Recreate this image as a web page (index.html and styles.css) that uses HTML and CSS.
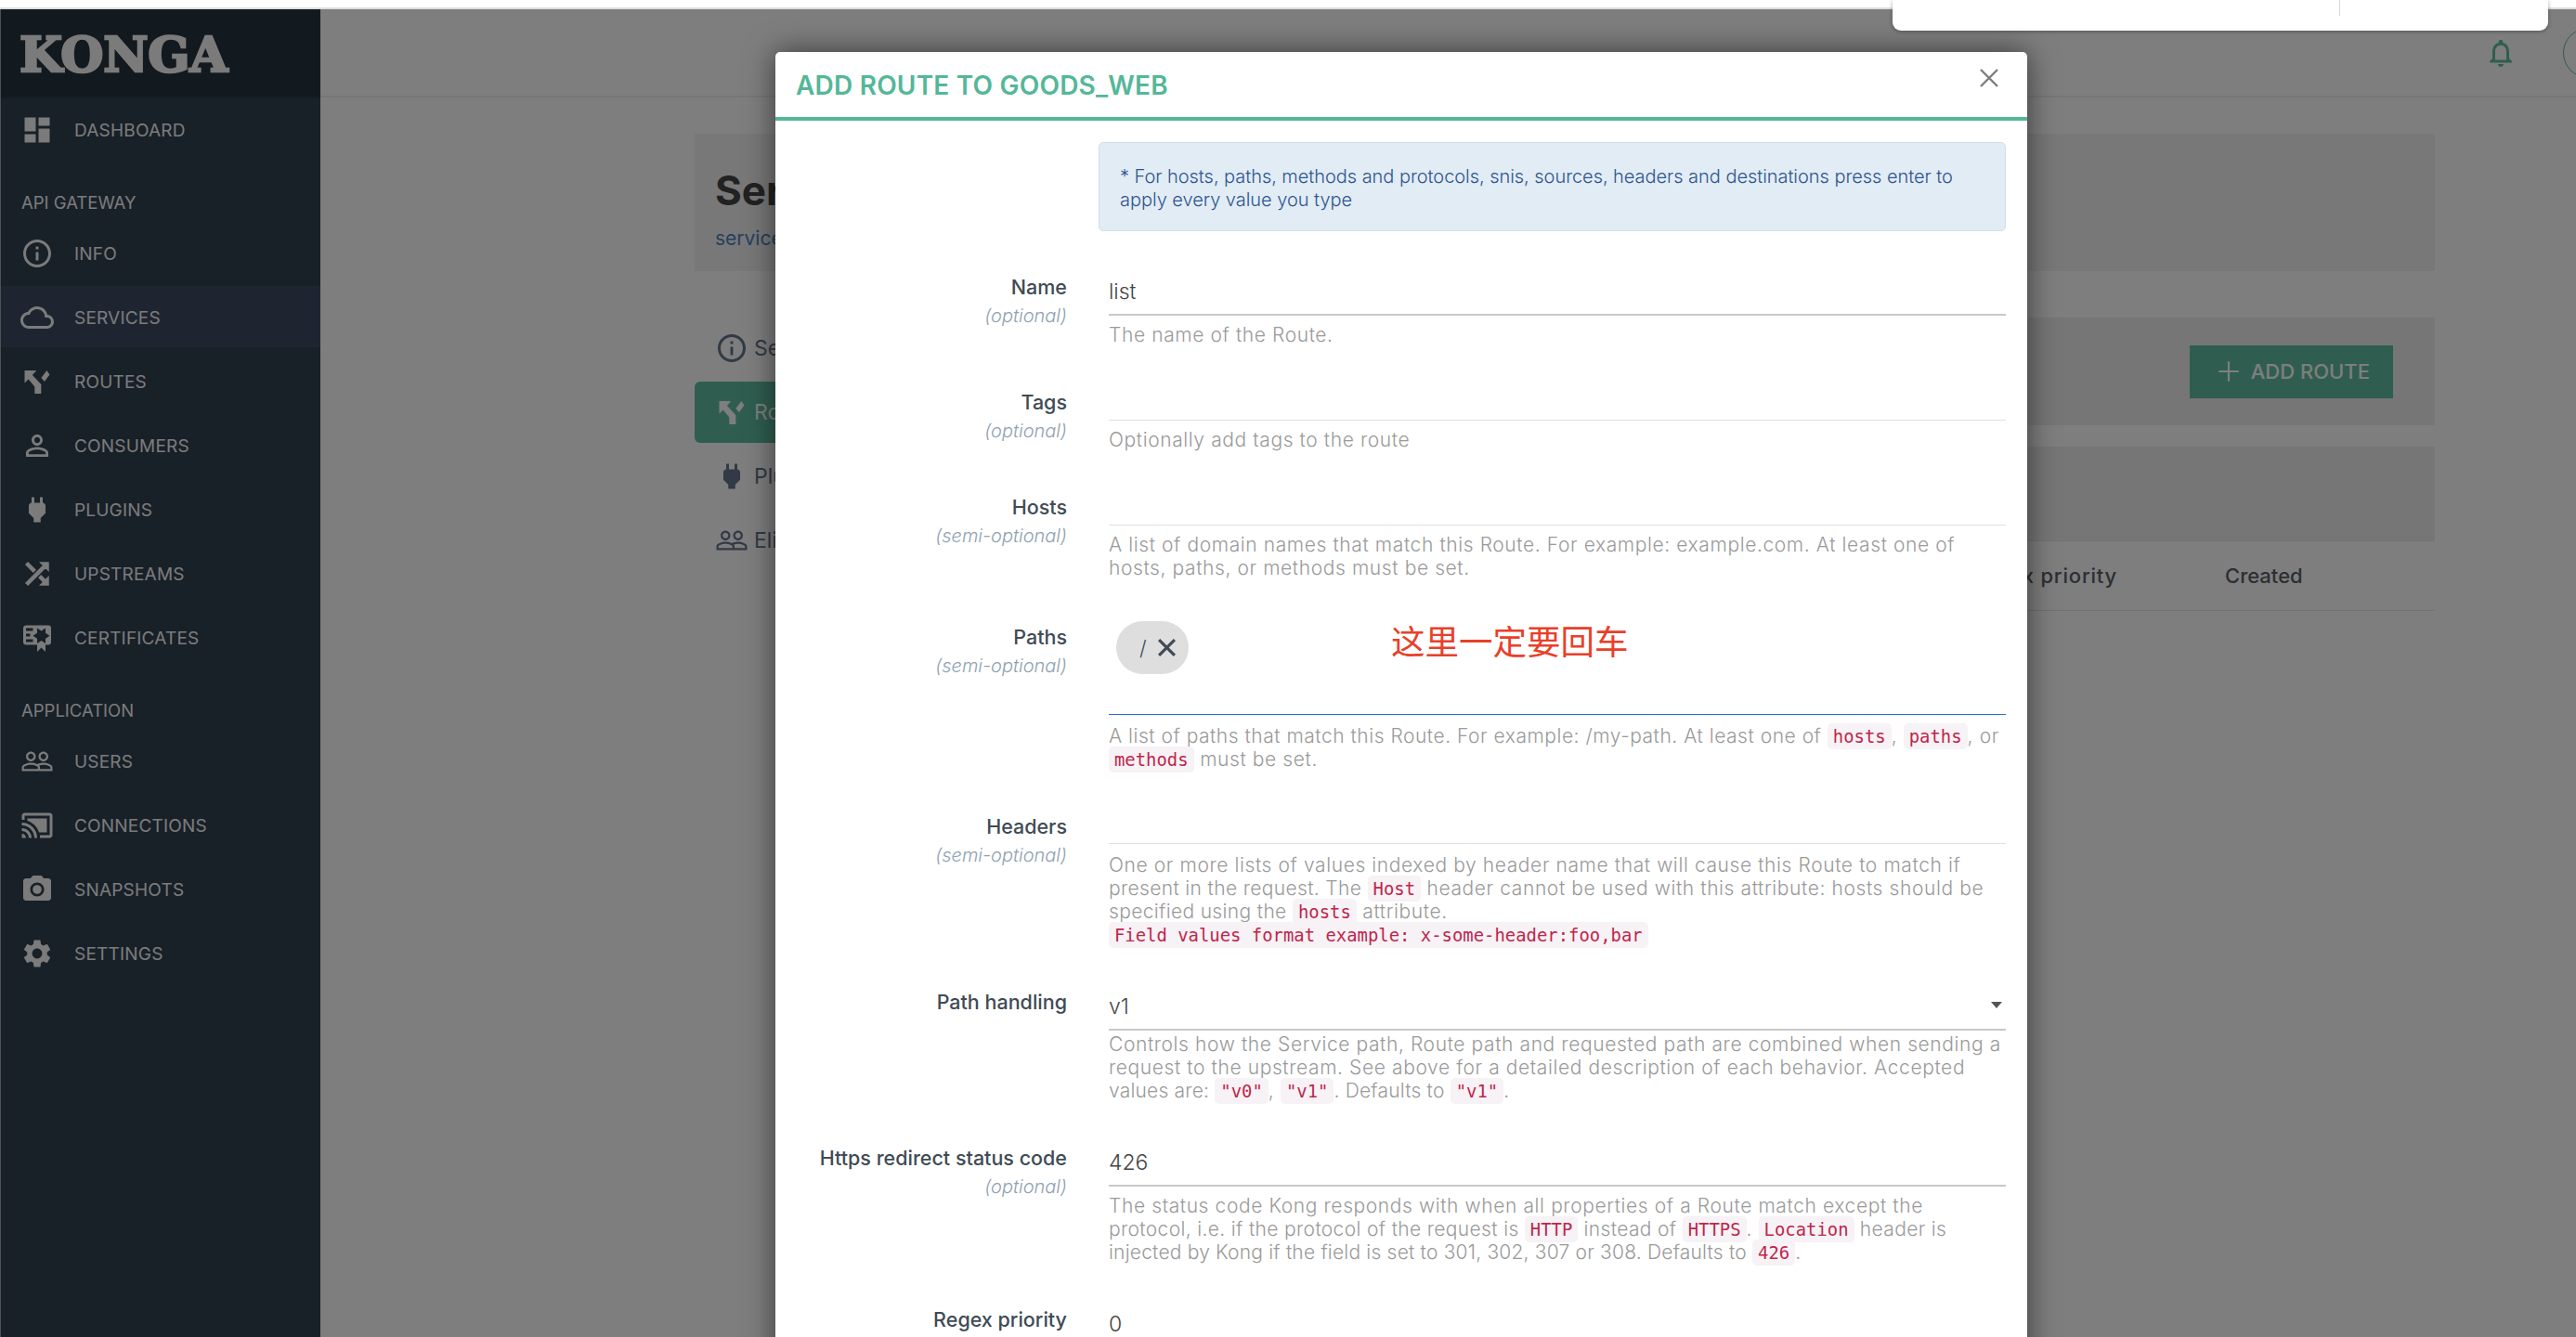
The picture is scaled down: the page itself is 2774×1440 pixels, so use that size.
FILE: index.html
```html
<!DOCTYPE html>
<html lang="en">
<head>
  <meta charset="UTF-8" />
  <title>Konga</title>
  <link rel="stylesheet" href="styles.css">
</head>
<body>

  <div class="top-strip"></div>
  <div class="top-panel"><span class="top-panel-rule"></span></div>

  <div class="app">
    <aside class="sidebar">
      <div class="logo">KONGA</div>
      <nav>
        <a class="nav-item"><svg viewBox="0 0 24 24"><path d="M3 13h8V3H3v10zm0 8h8v-6H3v6zm10 0h8V11h-8v10zm0-18v6h8V3h-8z"/></svg>DASHBOARD</a>
        <div class="nav-title">API GATEWAY</div>
        <a class="nav-item"><svg viewBox="0 0 24 24"><path d="M11 17h2v-6h-2v6zm1-15C6.48 2 2 6.48 2 12s4.48 10 10 10 10-4.48 10-10S17.52 2 12 2zm0 18c-4.41 0-8-3.59-8-8s3.59-8 8-8 8 3.59 8 8-3.59 8-8 8zm-1-11h2V7h-2v2z"/></svg>INFO</a>
        <a class="nav-item active"><svg viewBox="0 0 24 24"><path d="M19.35 10.04C18.67 6.59 15.64 4 12 4 9.11 4 6.6 5.64 5.35 8.04 2.34 8.36 0 10.91 0 14c0 3.31 2.69 6 6 6h13c2.76 0 5-2.24 5-5 0-2.64-2.05-4.78-4.65-4.96zM19 18H6c-2.21 0-4-1.79-4-4s1.79-4 4-4h.71C7.37 7.69 9.48 6 12 6c3.04 0 5.5 2.46 5.5 5.5v.5H19c1.66 0 3 1.34 3 3s-1.34 3-3 3z"/></svg>SERVICES</a>
        <a class="nav-item"><svg viewBox="0 0 24 24"><path d="M3 4h8.5L8.6 7.4l6.3 6.6v6.7h-4.7v-5.1L5.8 10.4 3 13zM14.9 9.3L18.9 4 21 7l-3.7 5z"/></svg>ROUTES</a>
        <a class="nav-item"><svg viewBox="0 0 24 24"><path d="M12 5.9c1.16 0 2.1.94 2.1 2.1s-.94 2.1-2.1 2.1S9.9 9.16 9.9 8s.94-2.1 2.1-2.1m0 9c2.97 0 6.1 1.46 6.1 2.1v1.1H5.9V17c0-.64 3.13-2.1 6.1-2.1M12 4C9.79 4 8 5.79 8 8s1.79 4 4 4 4-1.79 4-4-1.79-4-4-4zm0 9c-2.67 0-8 1.34-8 4v3h16v-3c0-2.66-5.33-4-8-4z"/></svg>CONSUMERS</a>
        <a class="nav-item"><svg viewBox="0 0 24 24"><path d="M16,7V3H14V7H10V3H8V7C7,7 6,8 6,9V14.5L9.5,18V21H14.5V18L18,14.5V9C18,8 17,7 16,7Z"/></svg>PLUGINS</a>
        <a class="nav-item"><svg class="thick" viewBox="0 0 24 24"><path d="M10.59 9.17L5.41 4 4 5.41l5.17 5.17 1.42-1.41zM14.5 4l2.04 2.04L4 18.59 5.41 20 17.96 7.46 20 9.5V4h-5.5zm.33 9.41l-1.41 1.41 3.13 3.13L14.5 20H20v-5.5l-2.04 2.04-3.13-3.13z"/></svg>UPSTREAMS</a>
        <a class="nav-item"><svg viewBox="0 0 24 24"><path d="M4,3C2.89,3 2,3.89 2,5V15A2,2 0 0,0 4,17H12V22L15,19L18,22V17H20A2,2 0 0,0 22,15V8L22,6V5A2,2 0 0,0 20,3H16V3H4M12,5L15,7L18,5V8.5L21,10.5L18,12.5V16L15,14L12,16V12.5L9,10.5L12,8.5V5M4,5H9V7H4V5M4,9H7V11H4V9M4,13H9V15H4V13Z"/></svg>CERTIFICATES</a>
        <div class="nav-title">APPLICATION</div>
        <a class="nav-item"><svg viewBox="0 0 24 24"><path d="M16.5 13c-1.2 0-3.07.34-4.5 1-1.43-.67-3.3-1-4.5-1C5.33 13 1 14.08 1 16.25V19h22v-2.75c0-2.17-4.33-3.25-6.5-3.25zm-4 4.5h-10v-1.25c0-.54 2.56-1.75 5-1.75s5 1.21 5 1.75v1.25zm9 0H14v-1.25c0-.46-.2-.86-.52-1.22.88-.3 1.96-.53 3.02-.53 2.44 0 5 1.21 5 1.75v1.25zM7.5 12c1.93 0 3.5-1.57 3.5-3.5S9.43 5 7.5 5 4 6.57 4 8.5 5.57 12 7.5 12zm0-5.5c1.1 0 2 .9 2 2s-.9 2-2 2-2-.9-2-2 .9-2 2-2zm9 5.5c1.93 0 3.5-1.57 3.5-3.5S18.43 5 16.5 5 13 6.57 13 8.5s1.57 3.5 3.5 3.5zm0-5.5c1.1 0 2 .9 2 2s-.9 2-2 2-2-.9-2-2 .9-2 2-2z"/></svg>USERS</a>
        <a class="nav-item"><svg viewBox="0 0 24 24"><path d="M1 18v3h3c0-1.66-1.34-3-3-3zm0-4v2c2.76 0 5 2.24 5 5h2c0-3.87-3.13-7-7-7zm18-7H5v1.63c3.96 1.28 7.09 4.41 8.37 8.37H19V7zM1 10v2c4.97 0 9 4.03 9 9h2c0-6.08-4.93-11-11-11zm20-7H3c-1.1 0-2 .9-2 2v3h2V5h18v14h-7v2h7c1.1 0 2-.9 2-2V5c0-1.1-.9-2-2-2z"/></svg>CONNECTIONS</a>
        <a class="nav-item"><svg viewBox="0 0 24 24"><circle cx="12" cy="12" r="3.2"/><path d="M9 2L7.17 4H4c-1.1 0-2 .9-2 2v12c0 1.1.9 2 2 2h16c1.1 0 2-.9 2-2V6c0-1.1-.9-2-2-2h-3.17L15 2H9zm3 15c-2.76 0-5-2.24-5-5s2.24-5 5-5 5 2.24 5 5-2.24 5-5 5z"/></svg>SNAPSHOTS</a>
        <a class="nav-item"><svg viewBox="0 0 24 24"><path d="M19.14 12.94c.04-.3.06-.61.06-.94 0-.32-.02-.64-.07-.94l2.03-1.58a.49.49 0 00.12-.61l-1.92-3.32a.488.488 0 00-.59-.22l-2.39.96c-.5-.38-1.03-.7-1.62-.94l-.36-2.54a.484.484 0 00-.48-.41h-3.84c-.24 0-.43.17-.47.41l-.36 2.54c-.59.24-1.13.57-1.62.94l-2.39-.96c-.22-.08-.47 0-.59.22L2.74 8.87c-.12.21-.08.47.12.61l2.03 1.58c-.05.3-.09.63-.09.94s.02.64.07.94l-2.03 1.58a.49.49 0 00-.12.61l1.92 3.32c.12.22.37.29.59.22l2.39-.96c.5.38 1.03.7 1.62.94l.36 2.54c.05.24.24.41.48.41h3.84c.24 0 .44-.17.47-.41l.36-2.54c.59-.24 1.13-.56 1.62-.94l2.39.96c.22.08.47 0 .59-.22l1.92-3.32c.12-.22.07-.47-.12-.61l-2.01-1.58zM12 15.6c-1.98 0-3.6-1.62-3.6-3.6s1.62-3.6 3.6-3.6 3.6 1.62 3.6 3.6-1.62 3.6-3.6 3.6z"/></svg>SETTINGS</a>
      </nav>
    </aside>

    <main class="main">
      <header class="topbar">
        <svg class="bell" viewBox="0 0 24 24"><path d="M12 22c1.1 0 2-.9 2-2h-4c0 1.1.9 2 2 2zm6-6v-5c0-3.07-1.63-5.64-4.5-6.32V4c0-.83-.67-1.5-1.5-1.5s-1.5.67-1.5 1.5v.68C7.64 5.36 6 7.92 6 11v5l-2 2v1h16v-1l-2-2zm-2 1H8v-6c0-2.48 1.51-4.5 4-4.5s4 2.02 4 4.5v6z"/></svg>
        <div class="avatar"></div>
      </header>

      <div class="content">
        <section class="title-card">
          <h1>Service</h1>
          <a class="crumb">services</a>
        </section>

        <div class="columns">
          <ul class="tabs">
            <li class="tab"><svg viewBox="0 0 24 24"><path d="M11 17h2v-6h-2v6zm1-15C6.48 2 2 6.48 2 12s4.48 10 10 10 10-4.48 10-10S17.52 2 12 2zm0 18c-4.41 0-8-3.59-8-8s3.59-8 8-8 8 3.59 8 8-3.59 8-8 8zm-1-11h2V7h-2v2z"/></svg>Service Details</li>
            <li class="tab current"><svg viewBox="0 0 24 24"><path d="M3 4h8.5L8.6 7.4l6.3 6.6v6.7h-4.7v-5.1L5.8 10.4 3 13zM14.9 9.3L18.9 4 21 7l-3.7 5z"/></svg>Routes</li>
            <li class="tab"><svg viewBox="0 0 24 24"><path d="M16,7V3H14V7H10V3H8V7C7,7 6,8 6,9V14.5L9.5,18V21H14.5V18L18,14.5V9C18,8 17,7 16,7Z"/></svg>Plugins</li>
            <li class="tab"><svg viewBox="0 0 24 24"><path d="M16.5 13c-1.2 0-3.07.34-4.5 1-1.43-.67-3.3-1-4.5-1C5.33 13 1 14.08 1 16.25V19h22v-2.75c0-2.17-4.33-3.25-6.5-3.25zm-4 4.5h-10v-1.25c0-.54 2.56-1.75 5-1.75s5 1.21 5 1.75v1.25zm9 0H14v-1.25c0-.46-.2-.86-.52-1.22.88-.3 1.96-.53 3.02-.53 2.44 0 5 1.21 5 1.75v1.25zM7.5 12c1.93 0 3.5-1.57 3.5-3.5S9.43 5 7.5 5 4 6.57 4 8.5 5.57 12 7.5 12zm0-5.5c1.1 0 2 .9 2 2s-.9 2-2 2-2-.9-2-2 .9-2 2-2zm9 5.5c1.93 0 3.5-1.57 3.5-3.5S18.43 5 16.5 5 13 6.57 13 8.5s1.57 3.5 3.5 3.5zm0-5.5c1.1 0 2 .9 2 2s-.9 2-2 2-2-.9-2-2 .9-2 2-2z"/></svg>Eligible consumers</li>
          </ul>

          <div class="panel">
            <div class="action-card">
              <button class="add-btn" type="button"><svg viewBox="0 0 24 24"><path d="M11 2h2v9h9v2h-9v9h-2v-9H2v-2h9z"/></svg>ADD ROUTE</button>
            </div>
            <div class="search-card"></div>
            <div class="table-head">
              <span class="col-regex">Regex priority</span>
              <span class="col-created">Created</span>
            </div>
          </div>
        </div>
      </div>
    </main>

    <div class="backdrop"></div>

    <div class="modal">
      <div class="modal-head">
        <h3>ADD ROUTE TO GOODS_WEB</h3>
        <svg class="modal-close" viewBox="0 0 20 20"><path d="M1 1l18 18M19 1L1 19"/></svg>
      </div>

      <form class="modal-body">
        <div class="row">
          <div class="row-label"></div>
          <div class="info-box">* For hosts, paths, methods and protocols, snis, sources, headers and destinations press enter to<br>apply every value you type</div>
        </div>

        <div class="row">
          <label class="row-label">Name<em>(optional)</em></label>
          <div class="row-field">
            <input class="text-input" value="list" />
            <p class="help">The name of the Route.</p>
          </div>
        </div>

        <div class="row">
          <label class="row-label">Tags<em>(optional)</em></label>
          <div class="row-field">
            <div class="tag-input"></div>
            <p class="help">Optionally add tags to the route</p>
          </div>
        </div>

        <div class="row">
          <label class="row-label">Hosts<em>(semi-optional)</em></label>
          <div class="row-field">
            <div class="tag-input"></div>
            <p class="help">A list of domain names that match this Route. For example: example.com. At least one of<br>hosts, paths, or methods must be set.</p>
          </div>
        </div>

        <div class="row paths">
          <label class="row-label">Paths<em>(semi-optional)</em></label>
          <div class="row-field">
            <div class="tag-input focused">
              <span class="chip"><span class="chip-text">/</span><svg viewBox="0 0 20 20"><path d="M2 2l16 16M18 2L2 18"/></svg></span>
              <span class="note">这里一定要回车</span>
            </div>
            <p class="help wide"><span class="loose">A list of paths that match this Route. For example: /my-path. At least one of </span><code>hosts</code>, <code>paths</code>, or<br><code>methods</code> must be set.</p>
          </div>
        </div>

        <div class="row">
          <label class="row-label">Headers<em>(semi-optional)</em></label>
          <div class="row-field">
            <div class="tag-input short"></div>
            <p class="help wide">One or more lists of values indexed by header name that will cause this Route to match if<br><span class="snug">present in the request. The </span><code>Host</code> header cannot be used with this attribute: hosts should be<br><span class="snug">specified using the </span><code>hosts</code> attribute.<br><code>Field values format example: x-some-header:foo,bar</code></p>
          </div>
        </div>

        <div class="row">
          <label class="row-label">Path handling</label>
          <div class="row-field">
            <div class="select-wrap">
              <input class="text-input" value="v1" />
              <span class="caret"></span>
            </div>
            <p class="help tight">Controls how the Service path, Route path and requested path are combined when sending a<br>request to the upstream. See above for a detailed description of each behavior. Accepted<br><span class="tighter">values are: </span><code>"v0"</code>, <code>"v1"</code><span class="tighter">. Defaults to </span><code>"v1"</code>.</p>
          </div>
        </div>

        <div class="row">
          <label class="row-label">Https redirect status code<em>(optional)</em></label>
          <div class="row-field">
            <input class="text-input" value="426" />
            <p class="help">The status code Kong responds with when all properties of a Route match except the<br><span class="snug">protocol, i.e. if the protocol of the request is </span><code>HTTP</code><span class="snug"> instead of </span><code>HTTPS</code>. <code>Location</code><span class="snug"> header is</span><br><span class="tighter">injected by Kong if the field is set to 301, 302, 307 or 308. Defaults to </span><code>426</code>.</p>
          </div>
        </div>

        <div class="row">
          <label class="row-label">Regex priority</label>
          <div class="row-field">
            <input class="text-input" value="0" />
          </div>
        </div>
      </form>
    </div>
  </div>

</body>
</html>
```

FILE: styles.css
```css
* {
  box-sizing: border-box;
}
html, body {
  height: 100%;
}
body {
  margin: 0;
  height: 1440px;
  overflow: hidden;
  background: #fff;
  font-family: Inter, "Noto Sans CJK SC", sans-serif;
  color: #404b55;
}
svg {
  fill: currentColor;
  flex: none;
}
svg.thick {
  stroke: currentColor;
  stroke-width: 1;
}

/* strip and panel from the window above the page */
.top-strip {
  height: 10px;
  background: #fff;
  border-bottom: 2px solid #dcdcdc;
}
.top-panel {
  position: absolute;
  z-index: 20;
  top: 0;
  left: 2038px;
  width: 706px;
  height: 33px;
  background: #fff;
  border-radius: 0 0 9px 9px;
  box-shadow: 0 1px 4px rgba(0,0,0,0.35);
}
.top-panel-rule {
  position: absolute;
  left: 481px;
  top: 0;
  width: 1px;
  height: 17px;
  background: #d8d8d8;
}

.app {
  position: relative;
  display: flex;
  height: 1430px;
  background: #fcfcfc;
}
.backdrop {
  position: absolute;
  inset: 0;
  background: rgba(0,0,0,0.5);
}

/* sidebar */
.sidebar {
  width: 345px;
  flex: none;
  border-left: 1px solid #a0a0a0;
  background: #304050;
  color: #f6f6f6;
}
.logo {
  height: 95px;
  padding: 12px 0 0 20px;
  background: #24323e;
  font-family: "DejaVu Serif", serif;
  font-weight: 700;
  font-size: 53px;
  line-height: 72px;
  letter-spacing: -0.3px;
  -webkit-text-stroke: 2.5px #f6f6f6;
}
.nav-item {
  display: flex;
  align-items: center;
  gap: 22px;
  height: 69px;
  padding: 1px 0 0 21px;
  font-size: 19px;
  letter-spacing: 0.2px;
  font-weight: 400;
}
.nav-item svg {
  width: 36px;
  height: 36px;
}
.nav-item.active {
  background: linear-gradient(#304050 1px, #3c4a62 1px, #3c4a62 67px, #304050 67px);
}
.nav-title {
  height: 64px;
  padding: 32px 0 0 22px;
  font-size: 18.5px;
  line-height: 24px;
}

/* page behind the modal */
.main {
  flex: 1;
  min-width: 0;
}
.topbar {
  display: flex;
  align-items: center;
  justify-content: flex-end;
  gap: 49px;
  height: 95px;
  margin-right: -40px;
  border-bottom: 2px solid #eee;
}
.bell {
  width: 36px;
  height: 36px;
  color: #5ebca0;
}
.avatar {
  width: 54px;
  height: 54px;
  border: 1px solid #5ebca0;
  border-radius: 50%;
}
.content {
  padding: 39px 152px 0 403px;
}
.title-card {
  height: 148px;
  padding: 36px 22px 0;
  background: #f0f0f0;
}
.title-card h1 {
  margin: 0;
  font-size: 44px;
  line-height: 50px;
  font-weight: 700;
  color: #444;
}
.crumb {
  display: block;
  margin-top: 14px;
  font-size: 21px;
  color: #4f7fbf;
}
.columns {
  display: flex;
  gap: 30px;
  margin-top: 50px;
}
.tabs {
  display: flex;
  flex-direction: column;
  gap: 3px;
  width: 400px;
  flex: none;
  margin: 0;
  padding: 0;
  list-style: none;
}
.tab {
  display: flex;
  align-items: center;
  gap: 6px;
  height: 66px;
  padding-left: 22px;
  border-radius: 6px;
  font-size: 23px;
  color: #62748c;
}
.tab svg {
  width: 36px;
  height: 36px;
}
.tab.current {
  background: #5ebca0;
  color: #fcfcfc;
}
.panel {
  flex: 1;
  min-width: 0;
}
.action-card {
  display: flex;
  align-items: center;
  justify-content: flex-end;
  height: 116px;
  padding-right: 45px;
  background: #ececec;
}
.add-btn {
  display: flex;
  align-items: center;
  gap: 11px;
  height: 57px;
  padding: 0 25px 0 29px;
  border: 0;
  background: #5ebca0;
  color: #fcfcfc;
  font: 500 22px Inter, sans-serif;
}
.add-btn svg {
  width: 26px;
  height: 26px;
}
.search-card {
  height: 102px;
  margin-top: 23px;
  background: #ececec;
  border-bottom: 1px solid #e2e2e2;
}
.table-head {
  display: flex;
  justify-content: flex-end;
  align-items: center;
  height: 75px;
  border-bottom: 1px solid #e2e2e2;
  font-size: 22px;
  font-weight: 500;
  color: #585e68;
}
.col-regex {
  letter-spacing: 0.8px;
}
.col-created {
  width: 226px;
  margin-left: 116px;
}

/* modal */
.modal {
  position: absolute;
  z-index: 10;
  left: 835px;
  top: 46px;
  width: 1348px;
  height: 1500px;
  background: #fff;
  border-radius: 5px 5px 0 0;
  box-shadow: 0 0 32px rgba(0,0,0,0.55);
}
.modal-head {
  display: flex;
  justify-content: space-between;
  height: 74px;
  padding: 0 31px 0 22px;
  border-bottom: 4px solid #54b798;
}
.modal-head h3 {
  margin: 0;
  font-size: 28px;
  line-height: 72px;
  font-weight: 600;
  letter-spacing: 0.2px;
  color: #54b798;
}
.modal-close {
  width: 20px;
  height: 20px;
  margin-top: 18px;
  fill: none;
  stroke: #7d7d7d;
  stroke-width: 2.4;
}
.modal-body {
  padding: 23px 23px 0 0;
}
.row {
  display: flex;
  gap: 45px;
  margin-bottom: 40px;
}
.row.paths {
  margin-top: 42px;
}
.row-label {
  width: 314px;
  flex: none;
  padding-top: 5px;
  text-align: right;
  font-size: 21.5px;
  line-height: 30px;
  font-weight: 500;
  color: #404b55;
}
.row-label em {
  display: block;
  padding-top: 1px;
  font-size: 20px;
  font-weight: 300;
  color: #8fa1b2;
}
.row-field {
  flex: 1;
  min-width: 0;
}
.info-box {
  flex: 1;
  height: 96px;
  margin-left: -11px;
  padding: 24px 22px 0;
  background: #e2ecf5;
  border: 1px solid #cfe0ec;
  border-radius: 5px;
  font-size: 20px;
  line-height: 25px;
  font-weight: 300;
  letter-spacing: -0.04px;
  color: #2e568f;
}
.text-input {
  display: block;
  width: 100%;
  height: 51px;
  padding: 0;
  border: 0;
  border-bottom: 2px solid #c8c8c8;
  outline: 0;
  font: 300 23px Inter, sans-serif;
  color: #454545;
}
.tag-input {
  display: flex;
  align-items: flex-start;
  height: 40px;
  border-bottom: 1px solid #e0e0e0;
}
.tag-input.short {
  height: 39px;
}
.tag-input.focused {
  height: 104px;
  padding: 3px 0 0 8px;
  border-bottom-color: #2a6fc9;
}
.chip {
  display: flex;
  align-items: center;
  gap: 11px;
  width: 78px;
  height: 57px;
  padding-left: 25px;
  border-radius: 29px;
  background: #dedede;
  font-size: 22px;
  font-weight: 300;
}
.chip svg {
  width: 21px;
  height: 21px;
  fill: none;
  stroke: #404b55;
  stroke-width: 3;
}
.note {
  margin: 0 0 0 218px;
  font-family: "Noto Sans CJK SC", sans-serif;
  font-size: 36.5px;
  line-height: 42px;
  color: #e8402a;
}
.help {
  margin: 8px 0 0;
  font-size: 21px;
  line-height: 25px;
  font-weight: 300;
  letter-spacing: 0.6px;
  color: #9a9a9a;
  white-space: nowrap;
}
.help.wide {
  margin-top: 10px;
}
.help.tight {
  margin-top: 2px;
}
.loose {
  letter-spacing: 0.52px;
}
.snug {
  letter-spacing: 0.35px;
}
.tighter {
  letter-spacing: 0.2px;
}
code {
  padding: 3px 6px;
  border-radius: 5px;
  background: #f7f2f5;
  font-family: "DejaVu Sans Mono", monospace;
  font-size: 18.9px;
  line-height: 1;
  font-weight: 400;
  letter-spacing: 0;
  color: #c0254b;
}
.select-wrap {
  position: relative;
}
.caret {
  position: absolute;
  right: 4px;
  top: 20px;
  border: 6px solid transparent;
  border-top: 7px solid #555;
  border-bottom: 0;
}
```
